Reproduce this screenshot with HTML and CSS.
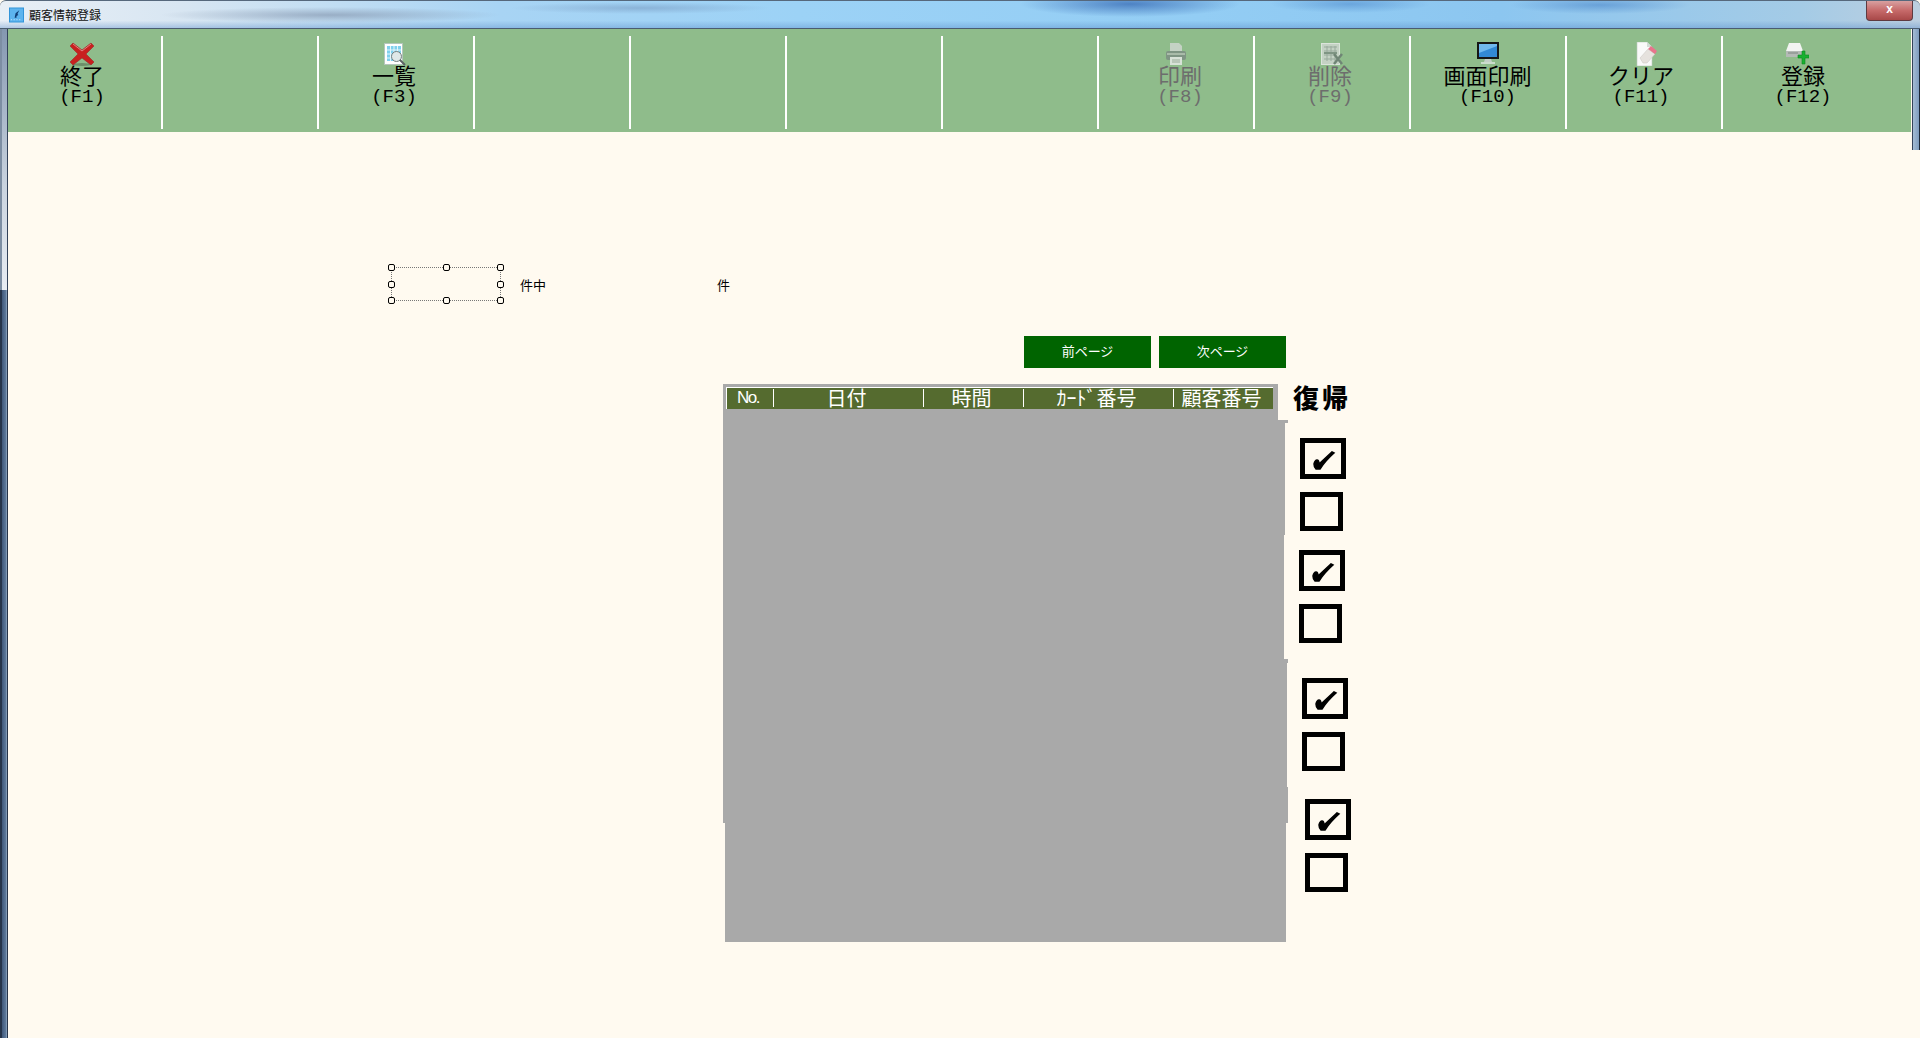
FILE: index.html
```html
<!DOCTYPE html>
<html lang="ja">
<head>
<meta charset="utf-8"/>
<title>顧客情報登録</title>
<link rel="stylesheet" href="styles.css">
</head>
<body>
<header class="titlebar">
	<svg class="app_icon" viewBox="0 0 16 16"><rect width="16" height="16" fill="#2f93d8"/><rect x="1" y="1" width="14" height="14" fill="#5db4ee"/><path d="M6 11l1-5 4-3-2 4 1 1-2 1 0 2z" fill="#0f3c74"/><path d="M2 13h1M5 13h1M8 13h1M11 13h1" stroke="#d8f0ff"/></svg>
	<span class="app_title">顧客情報登録</span>
	<span class="close_btn">x</span>
</header>
<div class="frame_left"></div>
<div class="frame_left_dark"></div>
<div class="frame_right"></div>
<nav class="toolbar">
	<button class="tool tool_f1">
		<svg class="icon" viewBox="0 0 24 24"><ellipse cx="12" cy="22.5" rx="9" ry="1.5" fill="#6d8f69"/><path d="M3 1l9 7 9-7 3 3-8 8 8 8-3 3-9-7-9 7-3-3 8-8-8-8z" fill="#c8201f" stroke="#9c2a2a" stroke-width=".6"/><path d="M3 2l9 7 9-7" fill="none" stroke="#e08080"/></svg>
		<span>終了</span><span class="fkey">(F1)</span>
	</button>
	<button class="tool"></button>
	<button class="tool tool_f3">
		<svg class="icon" viewBox="0 0 24 24"><rect x="2.500" y="1.500" width="18" height="21" fill="#fff" stroke="#b4c6bc"/><path d="M5 4h14v15H5z" fill="#7fd0ee"/><path d="M5 8h14M5 12h14M5 16h14M8.500 4v15M12 4v15M15.500 4v15" stroke="#e4f6fc"/><circle cx="14.500" cy="14.500" r="5" fill="#dfe8e8" stroke="#768080"/><path d="M18 18l5 5" stroke="#5c6464" stroke-width="2"/></svg>
		<span>一覧</span><span class="fkey">(F3)</span>
	</button>
	<button class="tool"></button>
	<button class="tool"></button>
	<button class="tool"></button>
	<button class="tool"></button>
	<button class="tool tool_f8 disabled">
		<svg class="icon" viewBox="0 0 24 24"><path d="M6 1h9l3 3v6H6z" fill="#c4d2c4"/><rect x="2" y="9" width="20" height="9" rx="2" fill="#7f9584"/><path d="M3 11h18v2H3z" fill="#a9bba9"/><rect x="6" y="15" width="12" height="8" fill="#d8e2d8"/><path d="M8 18h8M8 20h8" stroke="#9aac9a"/></svg>
		<span>印刷</span><span class="fkey">(F8)</span>
	</button>
	<button class="tool tool_f9 disabled">
		<svg class="icon" viewBox="0 0 24 24"><rect x="2.500" y="1.500" width="18" height="21" fill="#c4d2c4" stroke="#dbe4db"/><path d="M5 5h13M5 9h13M5 13h13M5 17h13M8 4v15M12 4v15M16 4v15" stroke="#98aa9c"/><path d="M5 10h13v2H5z" fill="#7f9584"/><path d="M15 12l8 10M23 12l-8 10" stroke="#6f8575" stroke-width="2.500"/></svg>
		<span>削除</span><span class="fkey">(F9)</span>
	</button>
	<button class="tool tool_f10">
		<svg class="icon" viewBox="0 0 24 24"><rect x="1" y="0" width="22" height="17" fill="#161616"/><rect x="3" y="2" width="18" height="13" fill="#3288d4"/><path d="M3 11l18-7V2H3z" fill="#70b8ee"/><path d="M9 17h6l1 3H8z" fill="#c4cfc8"/><path d="M5 21h14" stroke="#dfe8e2" stroke-width="1.500"/></svg>
		<span>画面印刷</span><span class="fkey">(F10)</span>
	</button>
	<button class="tool tool_f11">
		<svg class="icon" viewBox="0 0 24 24"><path d="M3 0h10l5 5v19H3z" fill="#fafafa" stroke="#bccac0" stroke-width=".6"/><path d="M13 0v5h5z" fill="#d4dcd6"/><path d="M6 16l8-9 7 5-8 9h-4z" fill="#e6e2de" stroke="#c8c4c0" stroke-width=".5"/><path d="M14 7l3-3 6 5-2 3z" fill="#e8748c"/></svg>
		<span>クリア</span><span class="fkey">(F11)</span>
	</button>
	<button class="tool tool_f12">
		<svg class="icon" viewBox="0 0 24 24"><path d="M4 1h11l3 8H1z" fill="#f2f4f2"/><path d="M1 9h17v6H1z" fill="#b4bab6"/><path d="M3 11h10" stroke="#7e8682"/><path d="M13 13h4V9h3v4h4v3h-4v6h-3v-6h-4z" fill="#18b030" stroke="#0c8a20" stroke-width=".6"/></svg>
		<span>登録</span><span class="fkey">(F12)</span>
	</button>
</nav>
<main class="content">
	<div class="counter">
		<div class="selection">
			<i class="handle h_tl"></i><i class="handle h_tc"></i><i class="handle h_tr"></i>
			<i class="handle h_ml"></i><i class="handle h_mr"></i>
			<i class="handle h_bl"></i><i class="handle h_bc"></i><i class="handle h_br"></i>
		</div>
		<span class="count_label">件中</span>
		<span class="count_label count_total">件</span>
	</div>
	<div class="pager">
		<button class="page_btn">前ページ</button>
		<button class="page_btn">次ページ</button>
	</div>
	<section class="list">
		<div class="sheet">
			<div class="strip strip_head">
				<div class="head_row">
					<span class="hd hd_no">No.</span>
					<span class="hd hd_date">日付</span>
					<span class="hd hd_time">時間</span>
					<span class="hd hd_card">ｶｰﾄﾞ番号</span>
					<span class="hd hd_cust">顧客番号</span>
				</div>
			</div>
			<div class="strip strip_lip"></div>
			<div class="strip strip_a"></div>
			<div class="strip strip_b"></div>
			<div class="strip strip_c"></div>
			<div class="strip strip_d"></div>
			<div class="strip strip_e"></div>
			<div class="strip strip_f"></div>
		</div>
		<div class="side">
			<div class="side_title">復帰</div>
			<div class="pair pair_1">
				<span class="box box_on"><svg class="tick" viewBox="0 0 36 31"><path d="M9 21Q10 17 12 17Q14 17 14 21L27 9L29 10Q20 18 15 26L11 26Q9 24 9 21z"/></svg></span>
				<span class="box box_off"></span>
			</div>
			<div class="pair pair_2">
				<span class="box box_on"><svg class="tick" viewBox="0 0 36 31"><path d="M9 21Q10 17 12 17Q14 17 14 21L27 9L29 10Q20 18 15 26L11 26Q9 24 9 21z"/></svg></span>
				<span class="box box_off"></span>
			</div>
			<div class="pair pair_3">
				<span class="box box_on"><svg class="tick" viewBox="0 0 36 31"><path d="M9 21Q10 17 12 17Q14 17 14 21L27 9L29 10Q20 18 15 26L11 26Q9 24 9 21z"/></svg></span>
				<span class="box box_off"></span>
			</div>
			<div class="pair pair_4">
				<span class="box box_on"><svg class="tick" viewBox="0 0 36 31"><path d="M9 21Q10 17 12 17Q14 17 14 21L27 9L29 10Q20 18 15 26L11 26Q9 24 9 21z"/></svg></span>
				<span class="box box_off"></span>
			</div>
		</div>
	</section>
</main>
</body>
</html>
```

FILE: styles.css
```css
html {
	height:100%;
}
body {
	margin:0;
	height:1038px;
	overflow:hidden;
	position:relative;
	background:#fffaf0;
	font:400 13px/1.2 "Noto Sans CJK JP", sans-serif;
	color:#000;
}
.titlebar {
	height:29px;
	display:flex;
	align-items:center;
	padding:0 0 1px 9px;
	box-sizing:border-box;
	position:relative;
	border-top:1px solid #56687c;
	border-radius:6px 6px 0 0;
	box-shadow:inset 0 -1px 0 #4a5c70;
	background:
		linear-gradient(rgba(255,255,255,0) 70%, rgba(90,140,200,.45) 100%),
		radial-gradient(ellipse 110px 13px at 1130px 3px, rgba(40,90,170,.65), transparent),
		radial-gradient(ellipse 80px 9px at 1350px 3px, rgba(70,130,200,.5), transparent),
		radial-gradient(ellipse 90px 9px at 1600px 4px, rgba(70,130,200,.55), transparent),
		radial-gradient(ellipse 170px 8px at 330px 14px, rgba(120,135,160,.55), transparent),
		radial-gradient(ellipse 130px 6px at 640px 7px, rgba(110,140,180,.45), transparent),
		linear-gradient(90deg, #e8eff6 0, #d8e6f2 180px, #a8d4f4 500px, #9cd2f6 800px, #93cdf4 1200px, #8cc6f0 1500px, #a4cbe6 1800px, #bccfe0 100%);
}
.app_icon {
	width:15px;
	height:16px;
}
.app_title {
	margin-left:5px;
	font-size:12px;
	line-height:16px;
	color:#111;
}
.close_btn {
	position:absolute;
	top:0;
	right:7px;
	width:45px;
	height:19px;
	border-radius:0 0 4px 4px;
	border:1px solid #5e3a40;
	border-top:0;
	background:linear-gradient(#d8a0a0, #c66a6a 50%, #a84848);
	color:#fff;
	font:700 12px/17px "Liberation Sans", sans-serif;
	text-align:center;
}
.frame_left,
.frame_left_dark,
.frame_right {
	position:absolute;
	z-index:1;
}
.frame_left {
	left:0;
	top:29px;
	width:8px;
	height:261px;
	box-sizing:border-box;
	border-left:2px solid #7d8ea3;
	border-right:1px solid #33425a;
	background:linear-gradient(#8497b0, #c9d3df 60%, #e8ecf2);
}
.frame_left_dark {
	left:0;
	top:290px;
	width:8px;
	bottom:0;
	box-sizing:border-box;
	border-left:2px solid #25344a;
	border-right:1px solid #26344a;
	background:linear-gradient(90deg, #40587a, #5a7698 70%, #90a8c2);
}
.frame_right {
	right:0;
	top:29px;
	width:8px;
	height:121px;
	box-sizing:border-box;
	border-left:1px solid #33425a;
	border-right:1px solid #1c2838;
	background:linear-gradient(90deg, #a4bcd4, #7e9cbe);
}
.toolbar {
	height:103px;
	margin:0 9px 0 7px;
	display:flex;
	padding-top:7px;
	box-sizing:border-box;
	background:#8fbc8b;
}
.tool {
	width:156px;
	height:93px;
	padding:6px 4px 0 0;
	box-sizing:border-box;
	background:none;
	border:0;
	border-right:2px solid #fff;
	display:flex;
	flex-direction:column;
	align-items:center;
	font:400 22px/20px "Noto Sans CJK JP", sans-serif;
	color:#000;
}
.tool:last-child {
	flex:1;
	border-right:0;
	padding-right:36px;
}
.tool.disabled {
	color:#6d6d6d;
}
.icon {
	width:24px;
	height:24px;
	margin-bottom:-2px;
	flex:none;
}
.fkey {
	margin-top:3px;
	font-family:"Liberation Mono", monospace;
	font-size:19px;
	line-height:21px;
}
.tool_f8 .icon { margin-left:3px; }
.tool_f8 span { margin-left:12px; }
.tool_f9 .icon { margin-left:2px; }
.tool_f10 .icon,
.tool_f10 span { margin-left:3px; }
.tool_f11 .icon { margin-left:8px; }
.tool_f11 span { margin-right:2px; }
.tool_f12 .icon { margin-right:4px; }
.tool_f12 span { margin-left:8px; }
.content {
	height:906px;
	padding-top:135px;
	box-sizing:border-box;
}
.counter {
	height:34px;
	display:flex;
	align-items:center;
	padding-left:391px;
}
.selection {
	width:110px;
	height:34px;
	box-sizing:border-box;
	border:1px dotted #777;
	position:relative;
}
.handle {
	position:absolute;
	width:7px;
	height:7px;
	box-sizing:border-box;
	background:#fffaf0;
	border:1px solid #000;
	border-radius:2px;
}
.h_tl { left:-4px; top:-4px; }
.h_tc { left:51px; top:-4px; }
.h_tr { right:-4px; top:-4px; }
.h_ml { left:-4px; top:13px; }
.h_mr { right:-4px; top:13px; }
.h_bl { left:-4px; bottom:-4px; }
.h_bc { left:51px; bottom:-4px; }
.h_br { right:-4px; bottom:-4px; }
.count_label {
	margin-left:19px;
	padding-top:2px;
}
.count_total {
	margin-left:171px;
}
.pager {
	display:flex;
	gap:8px;
	margin:35px 0 0 1024px;
}
.page_btn {
	width:127px;
	height:32px;
	padding:0 0 4px;
	border:0;
	background:#006400;
	color:#fff;
	font:400 13px "Noto Sans CJK JP", sans-serif;
}
.list {
	display:flex;
	margin:16px 0 0 723px;
}
.sheet {
	width:565px;
}
.strip {
	background:#a9a9a9;
}
.strip_head {
	width:555px;
	height:36px;
	padding:3px 0 0 3px;
	box-sizing:border-box;
}
.strip_lip {
	width:565px;
	height:3px;
}
.strip_a {
	width:562px;
	height:112px;
}
.strip_b {
	width:561px;
	height:124px;
}
.strip_c {
	width:565px;
	height:4px;
}
.strip_d {
	width:564px;
	height:124px;
}
.strip_e {
	width:565px;
	height:36px;
}
.strip_f {
	width:561px;
	height:119px;
	margin-left:2px;
}
.head_row {
	display:flex;
	width:547px;
	height:22px;
	box-sizing:border-box;
	border-top:1px solid #fff;
	border-left:1px solid #fff;
	background:#556b2f;
	color:#fff;
	font-size:20px;
}
.hd {
	height:18px;
	margin-top:1px;
	line-height:18px;
	padding-right:4px;
	box-sizing:border-box;
	text-align:center;
	border-right:1px solid #fff;
	white-space:nowrap;
}
.hd_no {
	width:47px;
	font:400 17px/18px "Liberation Sans", sans-serif;
	letter-spacing:-1.500px;
}
.hd_date {
	width:150px;
}
.hd_time {
	width:100px;
}
.hd_card {
	width:150px;
}
.hd_cust {
	flex:1;
	border-right:0;
}
.side {
	display:flex;
	flex-direction:column;
}
.side_title {
	width:58px;
	margin:-2px 0 0 5px;
	font-size:26px;
	font-weight:900;
	line-height:30px;
	letter-spacing:3px;
	white-space:nowrap;
}
.pair {
	display:flex;
	flex-direction:column;
	gap:13px;
	align-items:flex-start;
}
.pair_1 { margin:26px 0 0 12px; }
.pair_2 { margin:19px 0 0 11px; }
.pair_3 { margin:35px 0 0 14px; }
.pair_4 { margin:28px 0 0 17px; }
.box {
	display:block;
	box-sizing:border-box;
	border:5px solid #000;
	background:#fffaf0;
}
.box_on {
	width:46px;
	height:41px;
}
.box_off {
	width:43px;
	height:39px;
}
.tick {
	display:block;
	width:36px;
	height:31px;
}
.tick path {
	stroke:#000;
	stroke-width:1.500;
}
```
